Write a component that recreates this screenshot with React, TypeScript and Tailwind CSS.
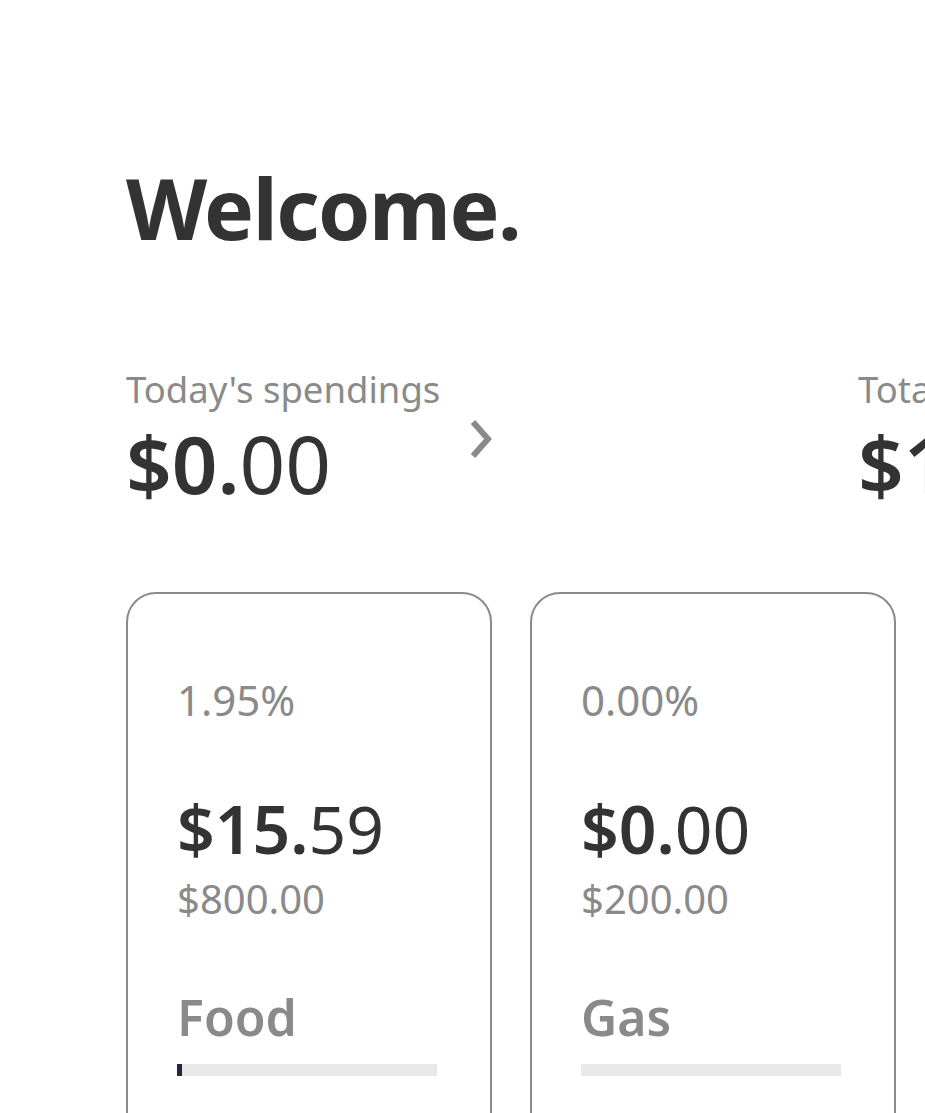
import React from 'react';

interface Budget {
  name: string;
  percent: string;
  spentWhole: string;
  spentCents: string;
  limit: string;
  fill: number;
}

const budgets: Budget[] = [
  { name: 'Food', percent: '1.95%', spentWhole: '$15.', spentCents: '59', limit: '$800.00', fill: 1.95 },
  { name: 'Gas', percent: '0.00%', spentWhole: '$0.', spentCents: '00', limit: '$200.00', fill: 0 },
  { name: 'Fun', percent: '0.00%', spentWhole: '$0.', spentCents: '00', limit: '$100.00', fill: 0 },
];

function Chevron() {
  return (
    <svg width="26" height="40" viewBox="0 0 26 40" fill="none" className="mt-[4px]">
      <path d="M5 3 L20 20 L5 37" stroke="#8a8a8a" strokeWidth="6" />
    </svg>
  );
}

function Stat({ label, whole, cents }: { label: string; whole: string; cents: string }) {
  return (
    <div className="flex items-center shrink-0">
      <div className="w-[342px]">
        <p className="text-[36.5px] leading-[40px] text-[#8a8a8a] whitespace-nowrap">{label}</p>
        <p className="mt-[12px] text-[80px] leading-[84px] text-[#333333] whitespace-nowrap">
          <span className="font-semibold">{whole}</span>
          {cents}
        </p>
      </div>
      <Chevron />
    </div>
  );
}

function BudgetCard({ b }: { b: Budget }) {
  return (
    <div className="w-[366px] h-[600px] shrink-0 rounded-[30px] border-2 border-[#8a8a8a] px-[49px] pt-[82px]">
      <p className="text-[42px] leading-[48px] text-[#8a8a8a]">{b.percent}</p>
      <p className="mt-[68px] text-[66px] leading-[72px] text-[#333333] whitespace-nowrap">
        <span className="font-semibold">{b.spentWhole}</span>
        {b.spentCents}
      </p>
      <p className="mt-[13px] text-[40px] leading-[44px] text-[#8a8a8a]">{b.limit}</p>
      <p className="mt-[66px] text-[50px] leading-[60px] font-semibold text-[#8a8a8a]">{b.name}</p>
      <div className="mt-[17px] h-[12px] w-[260px] bg-[#e8e8e8]">
        <div className="h-full bg-[#25253b]" style={{ width: `${b.fill}%` }} />
      </div>
    </div>
  );
}

export default function App() {
  return (
    <div
      className="h-[1113px] w-full overflow-hidden bg-white pl-[126px] pt-[166px]"
      style={{ fontFamily: '"Noto Sans", "Open Sans", sans-serif' }}
    >
      <h1 className="text-[84px] leading-none font-bold tracking-[-1.5px] text-[#333333]">Welcome.</h1>

      <div className="mt-[119px] flex gap-[364px]">
        <Stat label="Today's spendings" whole="$0." cents="00" />
        <Stat label="Total spendings" whole="$15." cents="59" />
      </div>

      <div className="mt-[87px] flex gap-[38px]">
        {budgets.map((b) => (
          <BudgetCard key={b.name} b={b} />
        ))}
      </div>
    </div>
  );
}
